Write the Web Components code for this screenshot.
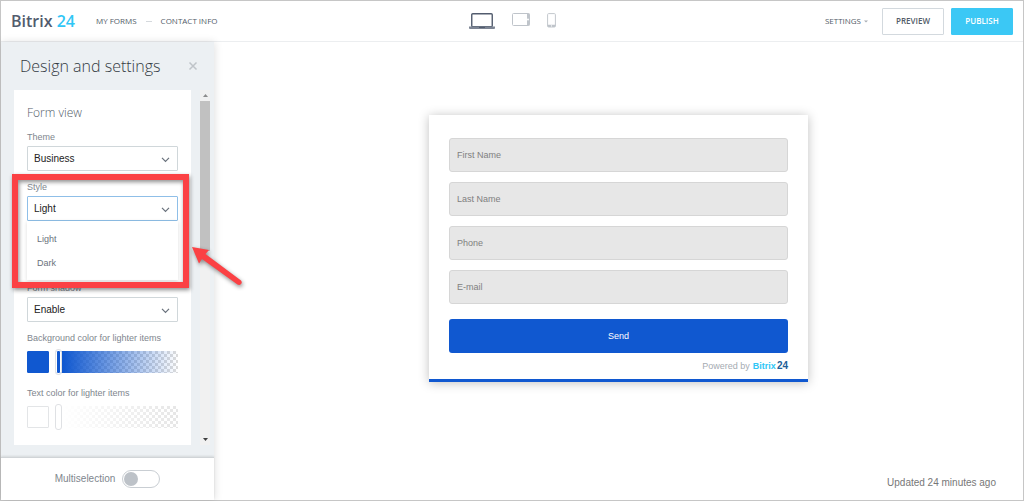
<!DOCTYPE html>
<html lang="en">
<head>
<meta charset="utf-8">
<meta name="viewport" content="width=device-width, initial-scale=1">
<title>Bitrix 24 – Contact info</title>
<style>
  html, body { margin: 0; }
  body {
    font-family: "Liberation Sans", Arial, sans-serif;
    font-size: 9px;
    line-height: 12px;
    color: #535c69;
    background: #fff;
  }
</style>
</head>
<body>
<form-designer></form-designer>

<script>
function define(name, html, setup) {
  const template = document.createElement('template');
  template.innerHTML = html;
  customElements.define(name, class extends HTMLElement {
    constructor() {
      super();
      this.attachShadow({ mode: 'open' }).append(template.content.cloneNode(true));
    }
    connectedCallback() {
      if (setup && !this.ready) { this.ready = true; setup(this, this.shadowRoot); }
    }
  });
}

/* Top bar: brand, breadcrumbs, device switch and actions */
define('app-header', `
<style>
  :host {
    display: grid; grid-template-columns: 1fr auto 1fr; align-items: center;
    height: 40px; padding: 0 10px; border-bottom: 1px solid #eceef0;
    font-family: "Open Sans", sans-serif; font-size: 8px; background: #fff;
  }
  a { color: inherit; text-decoration: none; }
  .left, .right, .devices { display: flex; align-items: center; }
  .brand { font-size: 16px; line-height: 20px; font-weight: 600; color: #525c6e; margin-right: 21px; }
  .brand span { color: #2fc6f6; }
  .dash { width: 6px; height: 1px; background: #d5d9dd; margin: 0 9px; }
  .devices { gap: 17px; align-items: flex-start; }
  .devices button { border: 0; padding: 0; background: none; display: flex; }
  svg { display: block; }
  .right { justify-content: flex-end; }
  .settings { border: 0; padding: 0; background: none; font: inherit; color: inherit; display: flex; align-items: center; gap: 3px; margin-right: 14px; }
  .btn {
    box-sizing: border-box; height: 27px; width: 62px; padding: 0; border: 1px solid #d3d9de; border-radius: 1px;
    background: #fff; color: #535c69; font: 600 8px/12px "Open Sans", sans-serif;
  }
  .primary { background: #3bc8f5; border-color: #3bc8f5; color: #fff; margin-left: 7px; }
</style>
<div class="left">
  <a class="brand" href="#">Bitrix <span>24</span></a>
  <a href="#forms">MY FORMS</a><span class="dash"></span><a href="#contact">CONTACT INFO</a>
</div>
<div class="devices">
  <button type="button" aria-label="Desktop"><svg width="26" height="17" viewBox="0 0 26 17"><rect x="2.75" y=".75" width="20.5" height="13" rx="1" fill="#fff" stroke="#525c6e" stroke-width="1.4"/><path d="M0 13.6h26v1.4q0 1-1 1H1q-1 0-1-1z" fill="#7d8594"/><path d="M10 14.5h6" stroke="#525c6e"/></svg></button>
  <button type="button" aria-label="Tablet"><svg width="18" height="13" viewBox="0 0 18 13"><rect x=".5" y=".5" width="17" height="12" rx="1" fill="#fff" stroke="#bfc4ca"/><path d="M15 .5h2q.5 0 .5.5v11q0 .5-.5.5h-2z" fill="#bfc4ca"/><circle cx="16" cy="6.5" r="1" fill="#fff"/></svg></button>
  <button type="button" aria-label="Phone"><svg width="9" height="15" viewBox="0 0 9 15"><rect x=".6" y=".6" width="7.8" height="13.4" rx="1" fill="#fff" stroke="#c3c8cd"/><path d="M.6 11.8h7.8V13q0 1-1 1H1.6q-1 0-1-1z" fill="#bfc4ca"/><circle cx="4.5" cy="12.9" r=".6" fill="#fff"/></svg></button>
</div>
<div class="right">
  <button class="settings" type="button">SETTINGS<svg width="4" height="3" viewBox="0 0 4 3"><path d="M0 .5h4L2 2.6z" fill="#a8adb4"/></svg></button>
  <button class="btn" type="button">PREVIEW</button>
  <button class="btn primary" type="button">PUBLISH</button>
</div>`);

/* Labelled drop-down; the "open" attribute shows the list of choices */
define('select-field', `
<style>
  :host { display: block; position: relative; }
  label { display: block; line-height: 18px; color: #80868e; }
  .box { position: relative; display: block; }
  select {
    appearance: none; display: block; box-sizing: border-box; width: 100%; height: 25px; margin: 0; padding: 0 24px 0 6px;
    border: 1px solid #d0d7da; border-radius: 1px; background: #fff; outline: 0;
    font: 10px/14px "Liberation Sans", Arial, sans-serif; color: #222;
  }
  :host([open]) select { border-color: #8fbfe8; }
  svg { position: absolute; right: 8px; top: 11px; pointer-events: none; }
  ul {
    display: none; position: absolute; z-index: 2; left: 0; right: 0; top: 100%; margin: 0; padding: 6px 0 5px; list-style: none;
    background: #fff; box-shadow: 0 1px 4px rgba(0,0,0,.14);
  }
  :host([open]) ul { display: block; }
  li { padding: 0 10px; line-height: 24px; color: #6a727c; }
</style>
<label for="s"></label>
<span class="box"><select id="s"></select>
<svg width="9" height="6" viewBox="0 0 9 6"><path d="M1 .8l3.5 3.6L8 .8" fill="none" stroke="#69717c" stroke-width="1.2"/></svg></span>
<ul></ul>`, (el, root) => {
  root.querySelector('label').textContent = el.getAttribute('label');
  const select = root.querySelector('select');
  for (const name of el.getAttribute('options').split(',')) {
    select.add(new Option(name));
    if (el.hasAttribute('open')) {
      const item = document.createElement('li');
      item.textContent = name;
      root.querySelector('ul').append(item);
    }
  }
});

/* Colour swatch with an opacity slider */
define('color-field', `
<style>
  :host { display: block; --c: #1058d0; --edge: #1058d0; --check: #dcdcdc; }
  label { display: block; line-height: 18px; color: #80868e; }
  .row { display: flex; align-items: center; gap: 7px; margin-top: 4px; }
  button { box-sizing: border-box; flex: none; width: 22px; height: 22px; padding: 0; border: 1px solid var(--edge); border-radius: 1px; background: var(--c); }
  input {
    appearance: none; flex: 1; min-width: 0; height: 22px; margin: 0; outline: 0;
    background: linear-gradient(90deg, var(--c) 6%, transparent), repeating-conic-gradient(var(--check) 0 25%, #fff 0 50%) 0 0 / 6px 6px;
  }
  input::-webkit-slider-runnable-track { height: 22px; }
  input::-webkit-slider-thumb {
    appearance: none; box-sizing: border-box; width: 5px; height: 24px; margin-top: -1px; border-radius: 2px;
    background: var(--c); border: 1px solid #fff; outline: 1px solid #dfe1e4;
  }
</style>
<label for="r"></label>
<div class="row"><button type="button" aria-label="Pick color"></button><input id="r" type="range" min="0" max="100" value="0"></div>`,
(el, root) => { root.querySelector('label').textContent = el.getAttribute('label'); });

/* Settings column */
define('settings-panel', `
<style>
  :host { display: flex; flex-direction: column; position: relative; background: #ecf0f3; box-shadow: 1px 0 8px rgba(0,0,0,.12); }
  header { display: flex; align-items: center; justify-content: space-between; height: 48px; padding: 0 16px 0 19px; }
  h1 { margin: 0; font: 300 16px/24px "Open Sans", sans-serif; color: #333a42; }
  .close { border: 0; padding: 0; background: none; display: flex; }
  .scroll { flex: 1; display: flex; justify-content: space-between; padding: 0 4px 12px 13px; }
  .card { width: 177px; box-sizing: border-box; padding: 14px 13px 16px; background: #fff; }
  h2 { margin: 0 0 6px; font: 300 12px/18px "Open Sans", sans-serif; color: #535c69; }
  select-field { margin-bottom: 7px; }
  select-field[open] { margin-bottom: 58px; }
  color-field { margin-bottom: 11px; }
  color-field:last-of-type { margin-bottom: 0; }
  .white { --c: #fff; --edge: #e3e5e7; --check: #e6e6e6; }
  .bar { display: flex; flex-direction: column; align-items: center; width: 10px; background: #f1f1f1; }
  .bar svg { flex: none; margin: 4px 0; }
  .thumb { width: 10px; height: 150px; background: #c1c1c1; }
  .bar svg:last-child { margin-top: auto; }
  footer { display: flex; align-items: center; justify-content: center; gap: 7px; height: 42px; background: #fff; border-top: 1px solid #d0d4d7; box-shadow: 0 -1px 2px rgba(0,0,0,.1); font-size: 10px; color: #80868e; }
  footer input { appearance: none; box-sizing: border-box; width: 38px; height: 18px; margin: 0; padding: 1px; border: 1px solid #c9ced3; border-radius: 9px; background: #fff; }
  footer input::before { content: ""; display: block; width: 14px; height: 14px; border-radius: 50%; background: #bdc2c8; }
</style>
<header><h1>Design and settings</h1>
<button class="close" type="button" aria-label="Close"><svg width="10" height="10" viewBox="0 0 10 10"><path d="M1.5 1.5l7 7m0-7l-7 7" stroke="#bfc4c9" stroke-width="1.5"/></svg></button></header>
<div class="scroll">
  <section class="card">
    <h2>Form view</h2>
    <select-field label="Theme" options="Business"></select-field>
    <select-field label="Style" options="Light,Dark" open></select-field>
    <select-field label="Form shadow" options="Enable"></select-field>
    <color-field label="Background color for lighter items"></color-field>
    <color-field class="white" label="Text color for lighter items"></color-field>
  </section>
  <div class="bar">
    <svg width="5" height="3" viewBox="0 0 5 3"><path d="M0 3L2.5 0 5 3z" fill="#8c8c8c"/></svg>
    <div class="thumb"></div>
    <svg width="5" height="3" viewBox="0 0 5 3"><path d="M0 0l2.5 3L5 0z" fill="#404040"/></svg>
  </div>
</div>
<footer><label for="multi">Multiselection</label><input id="multi" type="checkbox"></footer>`);

/* Live preview of the form */
define('form-preview', `
<style>
  :host { display: block; box-sizing: border-box; width: 379px; padding: 23px 20px 6px; background: #fff; border-bottom: 3px solid #1058d0; box-shadow: 0 1px 10px rgba(0,0,0,.25); }
  form { display: flex; flex-direction: column; gap: 10px; }
  input { box-sizing: border-box; height: 34px; padding: 0 7px; border: 1px solid #d6d6d6; border-radius: 3px; background: #e7e7e7; font: inherit; outline: 0; }
  input::placeholder { color: #808080; opacity: 1; }
  button { height: 34px; margin-top: 5px; border: 0; border-radius: 3px; background: #1058d0; color: #fff; font: inherit; }
  p { display: flex; justify-content: flex-end; gap: 3px; margin: 6px 0 0; line-height: 14px; color: #a5abb2; }
  a { color: #2fc6f6; font-weight: 700; text-decoration: none; }
  a span { color: #215f98; margin-left: 1px; font-size: 10px; }
</style>
<form>
  <input type="text" placeholder="First Name" aria-label="First Name">
  <input type="text" placeholder="Last Name" aria-label="Last Name">
  <input type="tel" placeholder="Phone" aria-label="Phone">
  <input type="email" placeholder="E-mail" aria-label="E-mail">
  <button type="button">Send</button>
</form>
<p>Powered by <a href="#">Bitrix<span>24</span></a></p>`);

/* Callout drawn over the Style setting */
define('style-callout', `
<style>
  :host { position: absolute; z-index: 5; left: 10px; top: 172px; pointer-events: none; }
  svg { display: block; overflow: visible; filter: drop-shadow(1px 2px 2px rgba(0,0,0,.45)); }
</style>
<svg width="232" height="116" viewBox="0 0 232 116" aria-hidden="true">
  <rect x="4" y="4" width="171" height="108" fill="none" stroke="#fb4144" stroke-width="6"/>
  <path d="M181 74L198 77l-3.500 4L230 107.500q1.500 2 0 3.500t-3.500.5L191 86l-3 4.500z" fill="#fb4144"/>
</svg>`);

define('form-designer', `
<style>
  :host { display: flex; flex-direction: column; position: relative; box-sizing: border-box; min-height: 100vh; border: 1px solid #c6c6c6; }
  main { flex: 1; display: grid; grid-template-columns: 213px 1fr; }
  .stage { display: flex; flex-direction: column; align-items: center; justify-content: space-between; padding-top: 73px; }
  .updated { align-self: flex-end; margin: 0; padding: 0 27px 10px; font-size: 10px; line-height: 14px; color: #777; }
</style>
<app-header></app-header>
<main>
  <settings-panel></settings-panel>
  <div class="stage"><form-preview></form-preview><p class="updated">Updated 24 minutes ago</p></div>
</main>
<style-callout></style-callout>`);
</script>
</body>
</html>
